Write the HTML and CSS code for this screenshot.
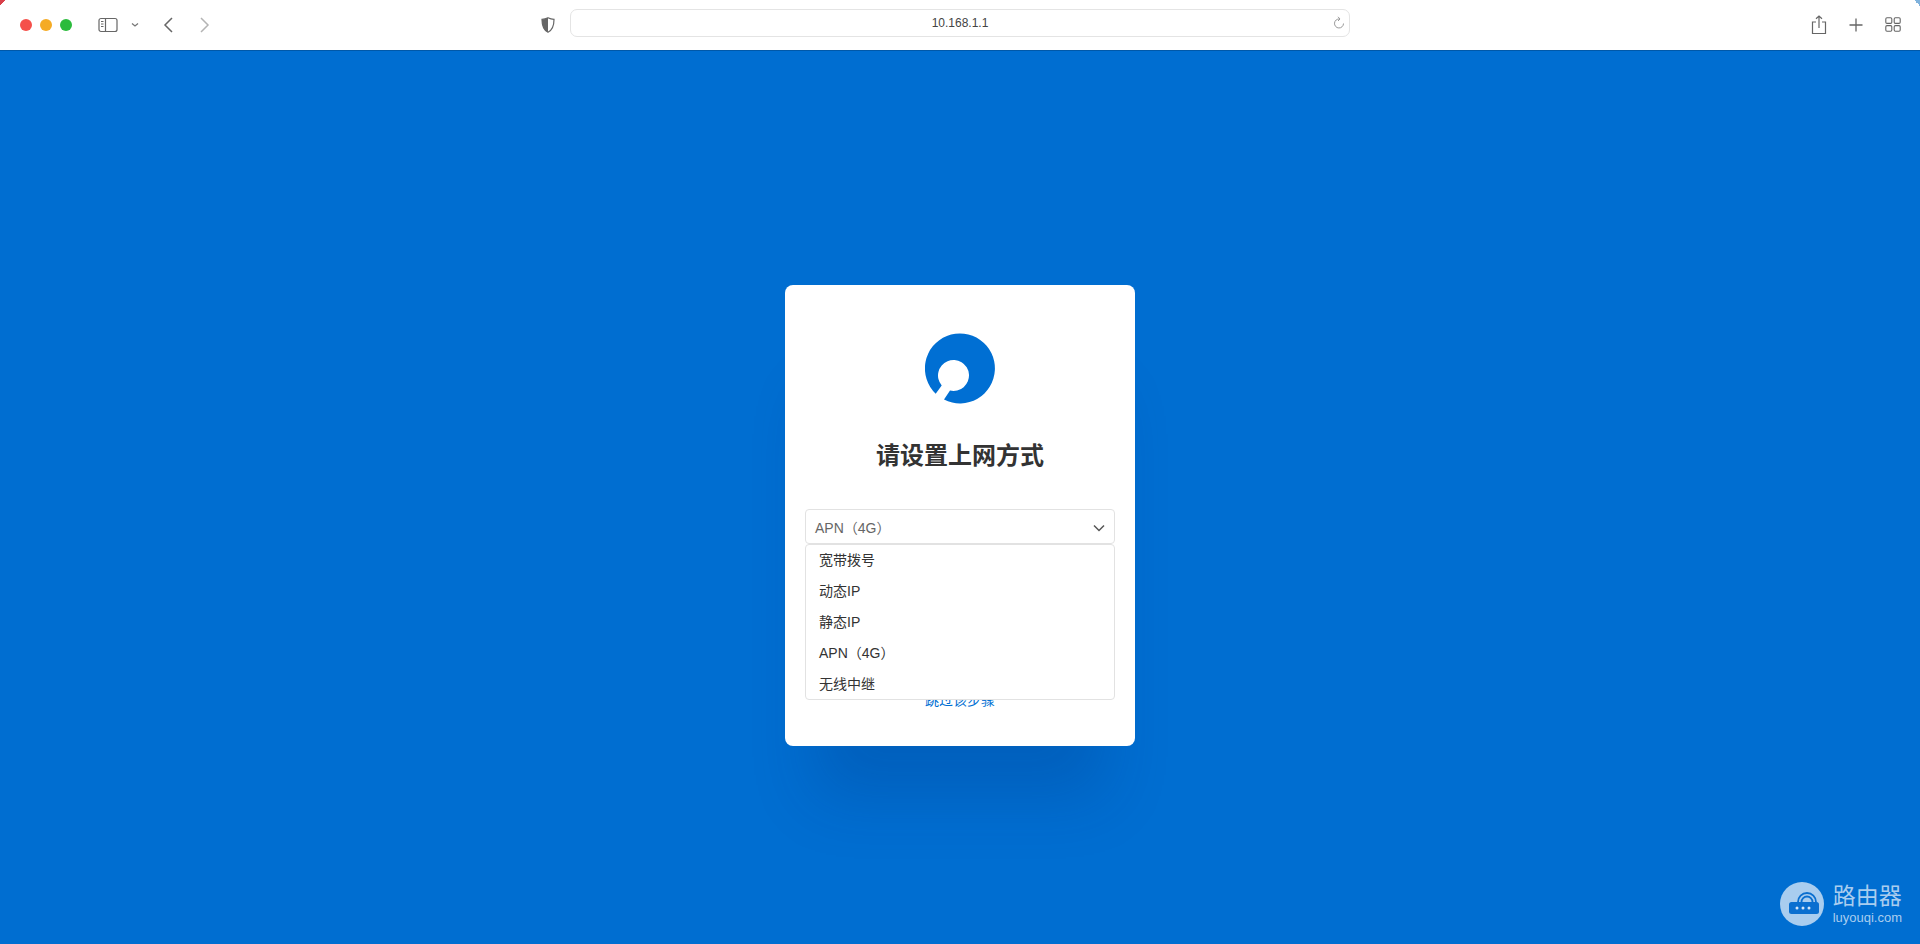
FILE: index.html
```html
<!DOCTYPE html>
<html lang="zh-CN">
<head>
    <meta charset="UTF-8">
    <title>10.168.1.1</title>
    <link rel="stylesheet" href="styles.css">
</head>
<body>
    <header class="toolbar">
        <div class="traffic">
            <span class="dot dot-red"></span>
            <span class="dot dot-yellow"></span>
            <span class="dot dot-green"></span>
        </div>
        <svg class="icon sidebar-icon" width="20" height="16" viewBox="0 0 20 16" fill="none" stroke="#666" stroke-width="1.2">
            <rect x="1" y="1.5" width="18" height="13" rx="2"/>
            <path d="M7.5 1.5v13"/>
            <path d="M3 4.5h2.5M3 7h2.5M3 9.5h2.5" stroke-width="1"/>
        </svg>
        <svg class="icon chevron-icon" width="8" height="6" viewBox="0 0 8 6" fill="none" stroke="#777" stroke-width="1.3">
            <path d="M1 1.5l3 2.5 3-2.5"/>
        </svg>
        <svg class="icon back-icon" width="11" height="16" viewBox="0 0 11 16" fill="none" stroke="#666" stroke-width="1.5">
            <path d="M9 1L2 8l7 7"/>
        </svg>
        <svg class="icon forward-icon" width="11" height="16" viewBox="0 0 11 16" fill="none" stroke="#b4b4b4" stroke-width="1.5">
            <path d="M2 1l7 7-7 7"/>
        </svg>
        <svg class="icon shield-icon" width="14" height="16" viewBox="0 0 14 16">
            <path d="M7 .8C5 1.8 3 2.3 1 2.4c0 6 1.5 10.5 6 12.8 4.5-2.3 6-6.8 6-12.8C11 2.3 9 1.8 7 .8z" fill="#fff" stroke="#666" stroke-width="1.2"/>
            <path d="M7 .8C5 1.8 3 2.3 1 2.4c0 6 1.5 10.5 6 12.8z" fill="#666"/>
        </svg>
        <div class="address">
            <span class="address-text">10.168.1.1</span>
            <svg class="reload-icon" width="12" height="14" viewBox="0 0 12 14" fill="none" stroke="#999" stroke-width="1">
                <path d="M6.5 3A4.5 4.5 0 1 0 10.5 7.5"/>
                <path d="M5 .8L7 3 5 5"/>
            </svg>
        </div>
        <div class="toolbar-right">
            <svg width="16" height="20" viewBox="0 0 16 20" fill="none" stroke="#666" stroke-width="1.2">
                <path d="M5 7H1.5v11.5h13V7H11"/>
                <path d="M8 13V1M5 3.8L8 1l3 2.8"/>
            </svg>
            <svg width="14" height="14" viewBox="0 0 14 14" fill="none" stroke="#666" stroke-width="1.3">
                <path d="M7 .5v13M.5 7h13"/>
            </svg>
            <svg width="16" height="15" viewBox="0 0 16 15" fill="none" stroke="#666" stroke-width="1.1">
                <rect x=".8" y=".8" width="6" height="5.6" rx="1.2"/>
                <rect x="9.2" y=".8" width="6" height="5.6" rx="1.2"/>
                <rect x=".8" y="8.6" width="6" height="5.6" rx="1.2"/>
                <rect x="9.2" y="8.6" width="6" height="5.6" rx="1.2"/>
            </svg>
        </div>
    </header>

    <main class="stage">
        <section class="card">
            <svg class="logo" width="70" height="72" viewBox="0 0 70 72">
                <path fill="#006fd3" d="M10.7 60.7A35 35 0 1 1 19 66.6L25 57.6A15.5 15.5 0 1 0 16.7 52.55Z"/>
            </svg>
            <h1 class="title">请设置上网方式</h1>
            <div class="select-wrap">
                <div class="select">
                    <span>APN（4G）</span>
                    <svg class="select-arrow" width="12" height="8" viewBox="0 0 12 8" fill="none" stroke="#555" stroke-width="1.5">
                        <path d="M1 1.5l5 5 5-5"/>
                    </svg>
                </div>
                <ul class="options">
                    <li>宽带拨号</li>
                    <li>动态IP</li>
                    <li>静态IP</li>
                    <li>APN（4G）</li>
                    <li>无线中继</li>
                </ul>
            </div>
            <a class="skip" href="#">跳过该步骤</a>
        </section>
    </main>

    <div class="watermark">
        <svg class="wm-badge" width="44" height="44" viewBox="0 0 44 44">
            <circle cx="22" cy="22" r="22" fill="#a9cdef"/>
            <path d="M18 20a9 9 0 0 1 18 0M21.5 20a5.5 5.5 0 0 1 11 0" fill="none" stroke="#0a6fd0" stroke-width="1.8"/>
            <rect x="9" y="20" width="30" height="12" rx="2.5" fill="#0a6fd0"/>
            <circle cx="17" cy="26" r="1.5" fill="#d5e6f7"/>
            <circle cx="23" cy="26" r="1.5" fill="#d5e6f7"/>
            <circle cx="29" cy="26" r="1.5" fill="#d5e6f7"/>
        </svg>
        <div class="wm-text">
            <div class="wm-cn">路由器</div>
            <div class="wm-en">luyouqi.com</div>
        </div>
    </div>
</body>
</html>
```

FILE: styles.css
```css
* {
    box-sizing: border-box;
}
html, body {
    height: 100%;
}
body {
    margin: 0;
    height: 944px;
    overflow: hidden;
    display: flex;
    flex-direction: column;
    background-color: #006ed1;
    font-family: "Liberation Sans", "Noto Sans CJK SC", sans-serif;
}

/* browser chrome */
.toolbar {
    height: 51px;
    flex-shrink: 0;
    display: flex;
    align-items: center;
    background: #fff;
    border-bottom: 1px solid #0058a8;
    padding: 0 0 1px 20px;
    position: relative;
}
.toolbar::before,
.toolbar::after {
    content: "";
    position: absolute;
    top: 0;
    width: 6px;
    height: 6px;
}
.toolbar::before {
    left: 0;
    background: linear-gradient(135deg, #d8404a 50%, transparent 50%);
}
.toolbar::after {
    right: 0;
    background: linear-gradient(225deg, #7fb2dc 50%, transparent 50%);
}
.traffic {
    display: flex;
    gap: 8px;
    margin-right: 26px;
}
.dot {
    width: 12px;
    height: 12px;
    border-radius: 50%;
}
.dot-red { background: #f5504a; }
.dot-yellow { background: #f5ab24; }
.dot-green { background: #2bbb3c; }
.icon {
    flex-shrink: 0;
}
.chevron-icon { margin-left: 13px; }
.back-icon { margin-left: 24px; }
.forward-icon { margin-left: 25px; }
.shield-icon { margin-left: 331px; }
.address {
    width: 780px;
    height: 28px;
    margin: 0 0 3px 15px;
    border: 1px solid #e4e4e4;
    border-radius: 7px;
    display: flex;
    align-items: center;
    justify-content: center;
    position: relative;
}
.address-text {
    font-size: 12px;
    color: #444;
}
.reload-icon {
    position: absolute;
    right: 4px;
    top: 6px;
}
.toolbar-right {
    margin-left: auto;
    margin-right: 19px;
    display: flex;
    align-items: center;
    gap: 22px;
}

/* router page */
.stage {
    flex: 1;
    display: flex;
    justify-content: center;
    align-items: flex-start;
    padding-top: 234px;
}
.card {
    width: 350px;
    height: 461px;
    background: #fff;
    border-radius: 8px;
    padding: 48px 20px 0;
    display: flex;
    flex-direction: column;
    align-items: center;
    box-shadow: 0 80px 60px -30px rgba(0, 40, 110, 0.2);
}
.logo {
    display: block;
}
.title {
    margin: 34px 0 0;
    height: 34px;
    line-height: 34px;
    font-size: 24px;
    font-weight: 700;
    color: #333;
}
.select-wrap {
    width: 310px;
    margin-top: 36px;
    position: relative;
}
.select {
    height: 35px;
    border: 1px solid #e2e2e2;
    border-radius: 4px;
    display: flex;
    align-items: center;
    justify-content: space-between;
    padding: 0 9px;
    font-size: 14px;
    color: #666;
}
.select-arrow {
    margin-top: 3px;
}
.options {
    position: absolute;
    top: 35px;
    left: 0;
    right: 0;
    z-index: 2;
    margin: 0;
    padding: 0;
    height: 156px;
    list-style: none;
    background: #fff;
    border: 1px solid #e2e2e2;
    border-radius: 4px;
}
.options li {
    height: 31px;
    line-height: 31px;
    padding-left: 13px;
    font-size: 14px;
    color: #333;
}
.skip {
    margin-top: 146px;
    font-size: 14px;
    line-height: 20px;
    color: #006fd3;
    text-decoration: none;
}

/* watermark */
.watermark {
    position: absolute;
    right: 18px;
    bottom: 18px;
    display: flex;
    align-items: center;
    gap: 9px;
}
.wm-badge {
    display: block;
}
.wm-text {
    color: #a9cdef;
}
.wm-cn {
    font-size: 23px;
    line-height: 27px;
}
.wm-en {
    font-size: 13px;
    line-height: 15px;
}
```
